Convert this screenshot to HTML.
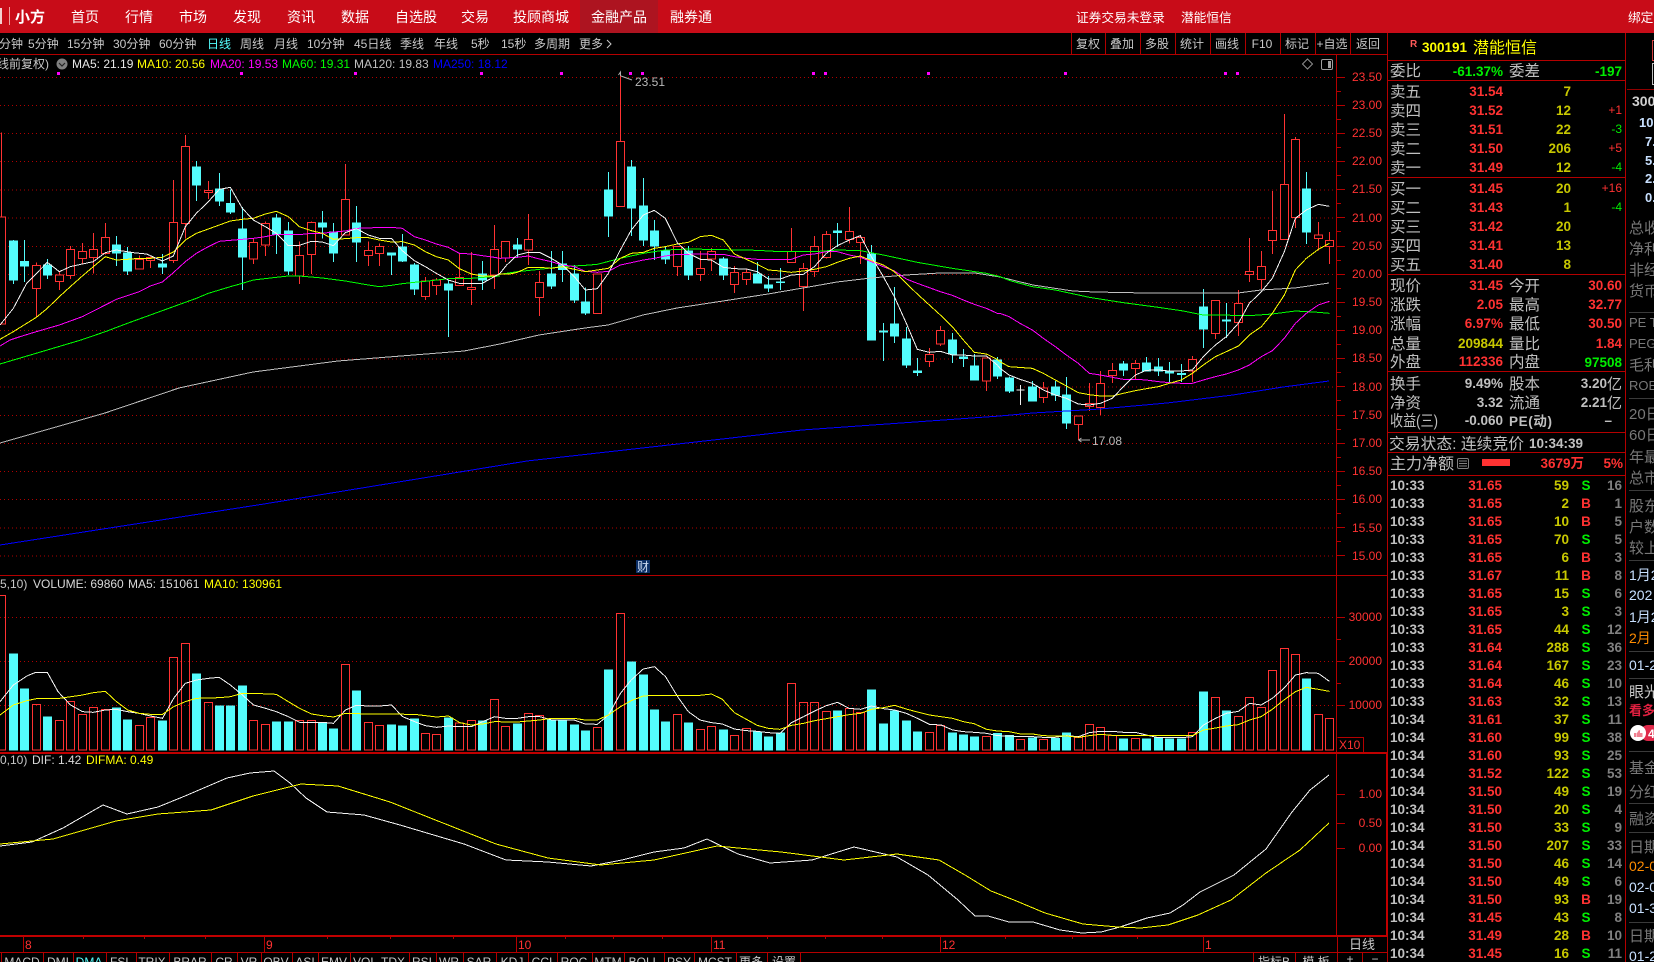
<!DOCTYPE html>
<html lang="zh"><head><meta charset="utf-8"><title>潜能恒信</title>
<style>
html,body{margin:0;padding:0;background:#000;width:1654px;height:962px;overflow:hidden}
svg{display:block}
text{font-family:"Liberation Sans","Noto Sans CJK SC",sans-serif}
.b text,text.b{font-weight:bold}
</style></head><body>
<svg width="1654" height="962" viewBox="0 0 1654 962" xmlns="http://www.w3.org/2000/svg">
<rect width="1654" height="962" fill="#000"/>
<!-- header -->
<rect width="1654" height="33" fill="#c80c18"/>
<rect x="580" width="78" height="33" fill="#ad1420"/>
<rect x="0" y="8" width="2" height="16" fill="#f3d0d0"/>
<rect x="9" y="7" width="1" height="18" fill="#f0a0a0"/>
<text x="15" y="22" font-size="15" font-weight="bold" fill="#fff">小方</text>
<g font-size="14" fill="#fff">
<text x="71" y="22">首页</text><text x="125" y="22">行情</text><text x="179" y="22">市场</text><text x="233" y="22">发现</text><text x="287" y="22">资讯</text><text x="341" y="22">数据</text><text x="395" y="22">自选股</text><text x="461" y="22">交易</text><text x="513" y="22">投顾商城</text><text x="591" y="22">金融产品</text><text x="670" y="22">融券通</text>
</g>
<g font-size="12.7" fill="#fff"><text x="1076" y="22">证券交易未登录</text><text x="1181" y="22">潜能恒信</text><text x="1628" y="22">绑定</text></g>
<!-- toolbar -->
<g font-size="12" fill="#c8c8c8">
<text x="-1" y="48">分钟</text><text x="28" y="48">5分钟</text><text x="67" y="48">15分钟</text><text x="113" y="48">30分钟</text><text x="159" y="48">60分钟</text><text x="207" y="48" fill="#54fcfc">日线</text><text x="240" y="48">周线</text><text x="274" y="48">月线</text><text x="307" y="48">10分钟</text><text x="354" y="48">45日线</text><text x="400" y="48">季线</text><text x="434" y="48">年线</text><text x="471" y="48">5秒</text><text x="501" y="48">15秒</text><text x="534" y="48">多周期</text><text x="579" y="48">更多</text>
</g>
<path d="M607 40l4 4-4 4" fill="none" stroke="#c8c8c8"/>
<g font-size="12" fill="#c8c8c8" text-anchor="middle">
<text x="1088" y="48">复权</text><text x="1122" y="48">叠加</text><text x="1157" y="48">多股</text><text x="1192" y="48">统计</text><text x="1227" y="48">画线</text><text x="1262" y="48">F10</text><text x="1297" y="48">标记</text><text x="1332" y="48">+自选</text><text x="1368" y="48">返回</text>
</g>
<path d="M1071.5 33V54M1105.5 33V54M1140.5 33V54M1175.5 33V54M1210.5 33V54M1245.5 33V54M1280.5 33V54M1315.5 33V54M1350.5 33V54" stroke="#b00000"/>
<!-- legend -->
<g font-size="12">
<text x="-3" y="68" fill="#c8c8c8">线前复权)</text>
<text x="72" y="68" fill="#e8e8e8">MA5: 21.19</text>
<text x="137" y="68" fill="#ffff00">MA10: 20.56</text>
<text x="210" y="68" fill="#ff00ff">MA20: 19.53</text>
<text x="282" y="68" fill="#00ff00">MA60: 19.31</text>
<text x="354" y="68" fill="#c0c0c0">MA120: 19.83</text>
<text x="433" y="68" fill="#0000ff">MA250: 18.12</text>
</g>
<circle cx="62" cy="64" r="5.5" fill="#808080"/><path d="M59 63l3 3 3-3" fill="none" stroke="#222" stroke-width="1.2"/>
<path d="M1307.5 59l5 5-5 5-5-5z" fill="none" stroke="#909090"/>
<rect x="1321.5" y="59.5" width="11" height="10" rx="1.5" fill="none" stroke="#a0a0a0"/><rect x="1328" y="61" width="3" height="7" fill="#a0a0a0"/>
<!-- magenta dots -->
<path d="M57 72h3v3h-3zM240 72h3v3h-3zM354 72h3v3h-3zM480 72h3v3h-3zM560 72h3v3h-3zM629 72h3v3h-3zM641 72h3v3h-3zM812 72h3v3h-3zM824 72h3v3h-3zM927 72h3v3h-3zM1064 72h3v3h-3zM1224 72h3v3h-3zM1236 72h3v3h-3z" fill="#ff00ff"/>
<!-- grid -->
<path d="M0 77H1337M0 105H1337M0 133H1337M0 161H1337M0 189.5H1337M0 217.5H1337M0 246H1337M0 274H1337M0 302H1337M0 330H1337M0 358.5H1337M0 386.5H1337M0 415H1337M0 443H1337M0 471H1337M0 499H1337M0 527.5H1337M0 555.5H1337M0 617H1337M0 661H1337M0 705H1337" stroke="#b00000" stroke-dasharray="1 3" fill="none" transform="translate(0,.5)"/>
<!-- candles -->
<g transform="translate(.5,70) scale(1,.33333)" shape-rendering="crispEdges">
<path vector-effect="non-scaling-stroke" stroke="#54fcfc" fill="none" d="M13 510V642M24 510V636M47 567V627M116 498V588M127 531V615M162 552V612M196 273V393M219 309V408M230 358V432M242 411V660M276 432V552M288 456V615M322 423V505M333 459V576M356 408V576M391 549V615M402 492V576M414 579V675M448 630V801M482 573V660M517 504V564M551 543V657M562 543V636M574 585V699M585 652V735M608 306V501M631 270V498M643 324V528M654 450V570M665 528V582M688 528V630M723 561V630M757 576V639M768 618V666M780 594V660M837 459V531M871 525V810M883 759V873M894 651V819M906 771V894M917 864V918M952 789V879M963 837V891M974 852V930M997 861V927M1009 920V969M1032 933V993M1055 933V993M1066 921V1077M1123 873V918M1146 861V903M1158 864V918M1169 876V938M1181 882V936M1203 657V834M1226 699V804M1306 306V522"/>
<path vector-effect="non-scaling-stroke" stroke="#ff3232" fill="none" d="M1 187V762M36 578V740M59 604V660M70 528V627M82 519V580M93 489V610M105 459V553M139 556V597M150 560V594M173 330V579M185 195V505M208 333V387M253 505V582M265 455V558M299 514V642M311 454V612M345 282V495M368 514V588M379 520V588M425 621V690M436 624V675M459 550V647M471 546V705M494 465V657M505 514V576M528 432V585M539 603V738M597 612V731M620 12V410M677 528V618M700 543V633M711 534V603M734 588V669M746 597V645M791 474V578M803 579V723M814 498V621M826 483V565M849 411V520M860 495V582M929 834V891M940 768V828M986 864V963M1043 936V999M1078 1038V1110M1089 939V1023M1100 903V1035M1112 879V939M1135 870V927M1192 858V936M1215 690V807M1238 660V798M1249 504V636M1261 543V657M1272 363V552M1284 132V510M1295 201V474M1318 456V542M1329 486V582"/>
<path vector-effect="non-scaling-stroke" stroke="#f0f0f0" fill="none" d="M1020 945V1005M1016 960H1024"/>
<path vector-effect="non-scaling-stroke" stroke="#ff3232" fill="#000" d="M-3 441h8V762h-8zM32 586h8V656h-8zM55 615h8V635h-8zM66 538h8V617h-8zM78 544h8V566h-8zM89 538h8V563h-8zM101 502h8V551h-8zM135 568h8V597h-8zM146 563h8V572h-8zM169 457h8V572h-8zM181 229h8V461h-8zM204 361h8V368h-8zM249 517h8V567h-8zM261 460h8V525h-8zM295 556h8V618h-8zM307 457h8V554h-8zM341 388h8V495h-8zM364 541h8V557h-8zM375 529h8V551h-8zM421 633h8V680h-8zM432 630h8V647h-8zM455 622h8V647h-8zM467 652h8V659h-8zM490 538h8V615h-8zM501 514h8V564h-8zM524 508h8V540h-8zM535 637h8V683h-8zM593 612h8V731h-8zM616 214h8V410h-8zM673 530h8V590h-8zM696 595h8V613h-8zM707 544h8V567h-8zM730 607h8V644h-8zM742 607h8V629h-8zM787 545h8V578h-8zM799 595h8V650h-8zM810 529h8V605h-8zM822 493h8V563h-8zM845 484h8V509h-8zM856 502h8V518h-8zM925 853h8V875h-8zM936 781h8V822h-8zM982 864h8V933h-8zM1039 954h8V983h-8zM1074 1038h8V1064h-8zM1085 1000h8V1010h-8zM1096 940h8V1013h-8zM1108 901h8V917h-8zM1131 880h8V896h-8zM1188 868h8V903h-8zM1211 691h8V791h-8zM1234 700h8V758h-8zM1245 604h8V613h-8zM1257 589h8V629h-8zM1268 481h8V512h-8zM1280 343h8V509h-8zM1291 208h8V442h-8zM1314 495h8V506h-8zM1325 511h8V530h-8z"/>
<path vector-effect="non-scaling-stroke" stroke="#54fcfc" fill="#54fcfc" d="M9 513h8V630h-8zM20 575h8V588h-8zM43 585h8V615h-8zM112 525h8V549h-8zM123 549h8V603h-8zM158 582h8V591h-8zM192 291h8V345h-8zM215 357h8V393h-8zM226 400h8V426h-8zM238 477h8V561h-8zM272 444h8V492h-8zM284 483h8V603h-8zM318 459h8V471h-8zM329 486h8V549h-8zM352 459h8V516h-8zM387 549h8V555h-8zM398 531h8V573h-8zM410 585h8V657h-8zM444 642h8V660h-8zM478 612h8V630h-8zM513 525h8V537h-8zM547 612h8V648h-8zM558 582h8V598h-8zM570 612h8V690h-8zM581 696h8V729h-8zM604 360h8V438h-8zM627 291h8V414h-8zM639 408h8V510h-8zM650 483h8V528h-8zM661 543h8V567h-8zM684 543h8V615h-8zM719 567h8V615h-8zM753 612h8V639h-8zM764 645h8V654h-8zM776 636h8V638h-8zM833 483h8V488h-8zM867 552h8V810h-8zM879 783h8V786h-8zM890 762h8V798h-8zM902 807h8V885h-8zM913 903h8V908h-8zM948 810h8V852h-8zM959 861h8V865h-8zM970 888h8V930h-8zM993 870h8V918h-8zM1005 924h8V963h-8zM1028 951h8V993h-8zM1051 951h8V975h-8zM1062 975h8V1059h-8zM1119 882h8V900h-8zM1142 879h8V903h-8zM1154 891h8V903h-8zM1165 903h8V909h-8zM1177 911h8V914h-8zM1199 711h8V777h-8zM1222 750h8V753h-8zM1302 357h8V486h-8z"/>
</g>
<!-- MA lines -->
<g fill="none" stroke-width="1" shape-rendering="crispEdges">
<path stroke="#0000ff" d="M0 545L264 504L527 461L802 430L1000 416L1033 413L1067 411L1100 409L1167 403L1233 395L1283 387L1329 381"/>
<path stroke="#c0c0c0" d="M0 443L105 413L179 388L253 372L338 361L464 351L500 344L539 335L585 328L608 325L643 315L677 308L723 301L768 294L803 288L837 282L871 278L906 275L940 273L975 273L1000 277L1033 285L1073 291L1095 292L1146 293L1181 293L1203 293L1238 293L1261 290L1295 288L1329 283"/>
<g stroke="#00ff00">
<polyline vector-effect="non-scaling-stroke" transform="translate(0,70) scale(.33333)" points="0,882 243,810 316,785 382,760 451,735 520,710 589,685 625,670 691,650 727,640 760,630 829,622 865,618 898,618 967,624 1036,633 1105,645 1138,650 1174,646 1207,641 1243,637 1276,634 1345,626 1414,625 1500,618"/>
<polyline vector-effect="non-scaling-stroke" transform="translate(500,70) scale(.33333)" points="0,613 52,605 118,598 187,590 256,586 292,583 361,565 430,550 496,540 565,537 670,539 772,541 841,545 943,545 1012,540 1081,542 1150,555 1252,577 1357,595 1459,610 1500,620 1530,632"/>
<polyline vector-effect="non-scaling-stroke" transform="translate(1000,100) scale(.33333)" points="30,542 97,560 166,570 268,592 370,608 475,622 544,632 610,645 715,646 748,647 817,642 886,633 955,637 988,640"/>
</g>
<g stroke="#ff00ff">
<polyline vector-effect="non-scaling-stroke" transform="translate(0,70) scale(.33333)" points="0,828 30,810 60,800 109,785 178,765 247,740 316,705 349,688 382,677 418,665 451,648 487,636 520,608 556,575 589,550 625,530 658,514 691,511 727,508 760,505 796,500 829,493 865,493 898,494 934,490 967,490 1000,486 1036,483 1069,475 1105,474 1138,472 1174,472 1207,475 1243,500 1276,510 1309,522 1345,532 1378,550 1414,552 1447,557 1483,562 1500,565"/>
<polyline vector-effect="non-scaling-stroke" transform="translate(500,70) scale(.33333)" points="0,565 52,562 85,558 118,567 154,575 187,585 223,590 256,604 292,607 325,604 361,585 394,578 430,570 463,565 496,558 532,553 565,553 601,552 634,553 670,553 703,560 739,565 772,568 805,568 841,568 874,568 910,555 943,552 979,545 1012,545 1048,555 1081,562 1114,575 1150,590 1183,603 1219,627 1252,640 1288,653 1321,665 1357,676 1390,690 1423,703 1459,715 1492,730 1500,730"/>
<polyline vector-effect="non-scaling-stroke" transform="translate(1000,100) scale(.33333)" points="0,640 27,650 60,670 97,690 130,715 166,740 199,765 235,790 268,820 301,825 337,832 370,838 406,838 439,840 475,845 508,848 544,850 577,850 610,840 646,830 679,822 715,810 748,795 784,770 817,752 853,715 886,670 919,640 955,615 988,604"/>
</g>
<g stroke="#ffff00">
<polyline vector-effect="non-scaling-stroke" transform="translate(0,70) scale(.33333)" points="0,808 40,785 109,742 142,715 178,680 211,650 247,618 280,590 316,560 349,570 382,568 418,565 451,565 487,562 520,546 556,510 589,490 625,477 658,465 691,453 727,448 760,445 796,432 829,424 865,440 898,470 934,482 967,490 1000,508 1036,506 1069,503 1105,503 1138,510 1174,516 1207,515 1243,525 1276,545 1309,560 1345,570 1378,596 1414,612 1447,618 1483,618 1500,612"/>
<polyline vector-effect="non-scaling-stroke" transform="translate(500,70) scale(.33333)" points="0,612 30,612 52,607 85,592 118,592 154,595 187,590 223,598 256,605 292,600 325,595 361,565 394,550 430,547 463,535 496,530 532,522 565,517 601,500 634,496 670,510 703,552 739,568 772,583 805,600 841,603 874,607 910,603 943,598 979,590 1012,577 1048,565 1081,558 1114,572 1150,585 1183,605 1219,640 1252,672 1288,705 1321,735 1357,770 1390,810 1423,847 1459,852 1492,868 1500,875"/>
<polyline vector-effect="non-scaling-stroke" transform="translate(1000,100) scale(.33333)" points="0,785 27,800 97,805 130,820 166,840 199,858 235,878 268,884 301,888 337,888 370,880 406,872 439,866 475,860 508,850 544,840 577,820 610,795 646,770 679,755 715,738 748,705 784,680 817,640 853,585 886,510 919,475 955,448 988,430"/>
</g>
<g stroke="#f4f4f4">
<polyline vector-effect="non-scaling-stroke" transform="translate(0,70) scale(.33333)" points="0,765 40,715 80,640 142,577 178,605 211,590 247,582 280,575 316,548 349,540 400,548 440,552 487,573 520,558 556,470 589,430 625,395 658,358 691,352 727,415 760,450 796,470 829,490 865,527 898,526 934,514 967,516 1000,527 1036,488 1069,476 1105,495 1138,505 1174,505 1207,542 1243,572 1276,590 1309,610 1345,630 1378,640 1414,640 1447,640 1483,620 1500,610"/>
<polyline vector-effect="non-scaling-stroke" transform="translate(500,70) scale(.33333)" points="0,610 20,585 52,555 85,547 118,547 154,565 187,585 223,620 256,660 292,656 325,610 361,540 394,480 430,435 463,421 496,445 532,518 565,550 601,568 634,570 670,592 703,596 739,597 772,605 805,627 841,627 874,615 910,613 943,590 979,550 1012,527 1048,510 1081,497 1114,560 1150,620 1183,680 1219,760 1252,838 1288,847 1321,844 1357,855 1390,855 1423,858 1459,858 1492,885 1500,895"/>
<polyline vector-effect="non-scaling-stroke" transform="translate(1000,100) scale(.33333)" points="0,805 27,825 60,838 97,850 130,870 166,885 199,895 235,912 268,915 301,910 337,895 370,860 406,825 439,811 475,810 508,813 544,813 577,810 610,770 646,735 679,710 715,670 748,610 784,575 817,535 853,455 886,355 919,330 955,313 988,319"/>
</g>
</g>
<!-- hi/lo labels -->
<path d="M620.5 76V72l-2 3M621 76l11 4" fill="none" stroke="#b0b0b0"/>
<text x="635" y="86" font-size="12" fill="#b8b8b8">23.51</text>
<path d="M1078.5 440l3-2M1078.5 440l3 2M1079 440H1090" fill="none" stroke="#b0b0b0"/>
<text x="1092" y="445" font-size="12" fill="#b8b8b8">17.08</text>
<rect x="636" y="560" width="14" height="13" fill="#0c2f66"/>
<text x="637" y="571" font-size="12" fill="#c8d8f0">财</text>
<!-- volume -->
<g transform="translate(.5,570) scale(1,.33333)" shape-rendering="crispEdges">
<path vector-effect="non-scaling-stroke" stroke="#ff3232" fill="none" d="M-3 76h8V540h-8zM32 403h8V540h-8zM55 451h8V540h-8zM66 394h8V540h-8zM78 433h8V540h-8zM89 412h8V540h-8zM101 418h8V540h-8zM135 466h8V540h-8zM146 442h8V540h-8zM169 262h8V540h-8zM181 220h8V540h-8zM204 397h8V540h-8zM249 451h8V540h-8zM261 463h8V540h-8zM295 451h8V540h-8zM307 451h8V540h-8zM341 283h8V540h-8zM364 457h8V540h-8zM375 466h8V540h-8zM421 490h8V540h-8zM432 493h8V540h-8zM455 459h8V540h-8zM467 451h8V540h-8zM490 388h8V540h-8zM501 469h8V540h-8zM524 430h8V540h-8zM535 436h8V540h-8zM593 472h8V540h-8zM616 130h8V540h-8zM673 433h8V540h-8zM696 478h8V540h-8zM707 469h8V540h-8zM730 496h8V540h-8zM742 475h8V540h-8zM787 340h8V540h-8zM799 397h8V540h-8zM810 397h8V540h-8zM822 424h8V540h-8zM845 415h8V540h-8zM856 427h8V540h-8zM925 487h8V540h-8zM936 466h8V540h-8zM982 499h8V540h-8zM1016 508h8V540h-8zM1039 508h8V540h-8zM1074 502h8V540h-8zM1085 463h8V540h-8zM1096 472h8V540h-8zM1108 497h8V540h-8zM1131 505h8V540h-8zM1188 487h8V540h-8zM1211 382h8V540h-8zM1234 439h8V540h-8zM1245 382h8V540h-8zM1257 412h8V540h-8zM1268 301h8V540h-8zM1280 235h8V540h-8zM1291 253h8V540h-8zM1314 433h8V540h-8zM1325 445h8V540h-8z"/>
<path vector-effect="non-scaling-stroke" stroke="#54fcfc" fill="#54fcfc" d="M9 252h8V540h-8zM20 357h8V540h-8zM43 441h8V540h-8zM112 414h8V540h-8zM123 450h8V540h-8zM158 453h8V540h-8zM192 312h8V540h-8zM215 408h8V540h-8zM226 408h8V540h-8zM238 348h8V540h-8zM272 456h8V540h-8zM284 456h8V540h-8zM318 459h8V540h-8zM329 477h8V540h-8zM352 363h8V540h-8zM387 465h8V540h-8zM398 468h8V540h-8zM410 447h8V540h-8zM444 444h8V540h-8zM478 453h8V540h-8zM513 462h8V540h-8zM547 450h8V540h-8zM558 450h8V540h-8zM570 465h8V540h-8zM581 483h8V540h-8zM604 300h8V540h-8zM627 276h8V540h-8zM639 315h8V540h-8zM650 420h8V540h-8zM661 456h8V540h-8zM684 459h8V540h-8zM719 480h8V540h-8zM753 486h8V540h-8zM764 501h8V540h-8zM776 489h8V540h-8zM833 423h8V540h-8zM867 360h8V540h-8zM879 462h8V540h-8zM890 423h8V540h-8zM902 453h8V540h-8zM913 486h8V540h-8zM948 489h8V540h-8zM959 495h8V540h-8zM970 501h8V540h-8zM993 491h8V540h-8zM1005 496h8V540h-8zM1028 504h8V540h-8zM1051 506h8V540h-8zM1062 489h8V540h-8zM1119 507h8V540h-8zM1142 507h8V540h-8zM1154 504h8V540h-8zM1165 507h8V540h-8zM1177 507h8V540h-8zM1199 366h8V540h-8zM1222 423h8V540h-8zM1302 327h8V540h-8z"/>
</g>
<g fill="none" shape-rendering="crispEdges">
<polyline vector-effect="non-scaling-stroke" stroke="#f4f4f4" transform="translate(0,570) scale(.4464,.33333)" points="0,395 30,345 60,318 80,307 106,307 130,365 158,405 185,425 209,427 236,420 261,418 286,425 312,430 337,438 364,445 389,385 415,340 440,330 467,325 491,322 516,345 543,375 568,405 595,415 619,425 646,440 671,457 698,457 722,457 747,460 774,420 798,406 825,408 850,408 877,405 902,440 929,455 953,467 978,472 1005,468 1030,470 1056,470 1081,455 1108,440 1132,445 1159,445 1184,440 1209,440 1236,450 1261,450 1286,450 1311,462 1338,463 1363,435 1390,370 1414,330 1441,297 1466,290 1491,320 1518,380 1542,425 1568,450"/>
<polyline vector-effect="non-scaling-stroke" stroke="#ffff00" transform="translate(0,570) scale(.4464,.33333)" points="0,435 30,405 60,392 82,386 133,385 185,375 209,368 236,364 261,395 286,420 312,430 337,433 364,433 389,410 415,395 440,385 491,383 516,380 543,370 568,370 619,373 646,395 671,415 698,432 722,437 747,441 774,430 825,432 929,433 978,441 1005,438 1030,458 1056,465 1081,462 1108,455 1159,456 1209,450 1236,445 1286,445 1311,450 1338,450 1363,435 1390,410 1414,392 1441,378 1466,376 1568,376"/>
<polyline vector-effect="non-scaling-stroke" stroke="#f4f4f4" transform="translate(700,570) scale(.4464,.33333)" points="0,450 26,458 50,462 77,477 104,482 128,484 153,488 179,490 205,458 232,440 257,423 283,407 308,397 334,415 360,418 384,408 411,416 436,420 462,430 487,445 514,463 540,465 566,480 590,485 614,487 642,490 666,497 692,498 718,500 745,500 769,502 795,502 821,497 848,500 872,488 897,484 924,484 949,487 975,487 1000,495 1026,503 1052,503 1078,503 1103,500 1128,465 1155,445 1179,430 1206,424 1231,400 1257,405 1282,385 1308,355 1334,315 1358,308 1385,310 1410,334"/>
<polyline vector-effect="non-scaling-stroke" stroke="#ffff00" transform="translate(700,570) scale(.4464,.33333)" points="0,376 26,372 50,388 77,428 104,448 128,466 153,475 179,478 205,466 232,460 257,452 283,446 308,440 334,434 360,430 384,418 411,413 436,406 462,417 487,426 514,435 540,440 566,445 590,455 614,461 642,478 666,483 692,485 718,492 745,492 769,497 795,498 821,498 848,502 872,497 897,493 924,496 1000,497 1103,497 1128,480 1155,474 1179,468 1206,464 1231,450 1257,440 1282,418 1308,390 1334,365 1358,352 1385,358 1410,364"/>
</g>
<g font-size="12">
<text x="0" y="588" fill="#c8c8c8">5,10)</text>
<text x="33" y="588" fill="#d8d8d8">VOLUME: 69860</text>
<text x="128" y="588" fill="#d8d8d8">MA5: 151061</text>
<text x="204" y="588" fill="#ffff00">MA10: 130961</text>
<text x="0" y="764" fill="#c8c8c8">0,10)</text>
<text x="32" y="764" fill="#d8d8d8">DIF: 1.42</text>
<text x="86" y="764" fill="#ffff00">DIFMA: 0.49</text>
</g>
<!-- macd -->
<g fill="none" shape-rendering="crispEdges">
<path stroke="#f4f4f4" d="M0 846L32 842L63 828L103 805L127 814L158 807L185 796L227 778L250 773L274 771L290 783L306 798L327 812L364 815L400 825L464 844L506 860L548 862L591 866L622 860L654 852L684 848L707 839L738 854L770 863L812 860L854 847L897 857L928 875L958 900L975 916L988 916L1009 922L1033 922L1060 930L1082 933L1101 932L1120 927L1147 918L1170 913L1183 905L1200 892L1234 875L1266 849L1292 812L1310 790L1329 775"/>
<path stroke="#ffff00" d="M0 844L53 839L116 821L158 814L211 810L253 796L301 784L338 786L390 802L443 823L496 844L548 858L601 865L654 860L717 846L781 852L844 860L897 854L939 860L965 875L991 891L1014 900L1045 913L1083 924L1118 927L1141 928L1168 925L1198 915L1231 900L1266 873L1300 850L1329 823"/>
</g>
<!-- frame lines -->
<g stroke="#b40000" fill="none" shape-rendering="crispEdges">
<path d="M0 54.5H1387M0 575.5H1387M1336.5 54V936M1387.5 33V962M1625.5 33V962"/>
<path stroke-width="2" stroke="#c00000" d="M0 753H1388M0 936H1388M1387 752V936"/>
<path d="M0 952.5H1388M1337.5 936V962M1337.5 737.5H1363.5V752"/>
<path d="M1387 60.5H1625M1387 80.5H1625M1387 177.5H1625M1387 274.5H1625M1387 371.5H1625M1387 432.5H1625M1387 452.5H1625M1387 475.5H1625"/>
<path d="M1337 77.5h8M1337 105.5h8M1337 133.5h8M1337 161.5h8M1337 189.5h8M1337 217.5h8M1337 246.5h8M1337 274.5h8M1337 302.5h8M1337 330.5h8M1337 358.5h8M1337 386.5h8M1337 415.5h8M1337 443.5h8M1337 471.5h8M1337 499.5h8M1337 527.5h8M1337 555.5h8M1337 91.5h4M1337 119.5h4M1337 147.5h4M1337 175.5h4M1337 203.5h4M1337 231.5h4M1337 260.5h4M1337 288.5h4M1337 316.5h4M1337 344.5h4M1337 372.5h4M1337 400.5h4M1337 429.5h4M1337 457.5h4M1337 485.5h4M1337 513.5h4M1337 541.5h4M1337 617.5h8M1337 661.5h8M1337 705.5h8M1337 639.5h4M1337 683.5h4M1337 794.5h8M1337 823.5h8M1337 848.5h8"/>
<path d="M23.5 936V952M264.5 936V952M516.5 936V952M711.5 936V952M940.5 936V952M1203.5 936V952M83.5 936v3M144.5 936v3M205.5 936v3M327.5 936v3M390.5 936v3M453.5 936v3M565.5 936v3M613.5 936v3M662.5 936v3M767.5 936v3M825.5 936v3M882.5 936v3M1005.5 936v3M1072.5 936v3M1137.5 936v3"/>
<path d="M1.5 952V962M43.5 952V962M73.5 952V962M106.5 952V962M136.5 952V962M169.5 952V962M211.5 952V962M237.5 952V962M261.5 952V962M292.5 952V962M318.5 952V962M350.5 952V962M409.5 952V962M436.5 952V962M463.5 952V962M496.5 952V962M528.5 952V962M557.5 952V962M592.5 952V962M624.5 952V962M664.5 952V962M694.5 952V962M736.5 952V962M767.5 952V962M800.5 952V962M1253.5 952V962M1295.5 952V962M1362.5 952V962"/>
</g>
<!-- axis labels -->
<g font-size="12" fill="#ff3232" text-anchor="end">
<text x="1382" y="81">23.50</text><text x="1382" y="109">23.00</text><text x="1382" y="137">22.50</text><text x="1382" y="165">22.00</text><text x="1382" y="193">21.50</text><text x="1382" y="222">21.00</text><text x="1382" y="250">20.50</text><text x="1382" y="278">20.00</text><text x="1382" y="306">19.50</text><text x="1382" y="334">19.00</text><text x="1382" y="362">18.50</text><text x="1382" y="391">18.00</text><text x="1382" y="419">17.50</text><text x="1382" y="447">17.00</text><text x="1382" y="475">16.50</text><text x="1382" y="503">16.00</text><text x="1382" y="532">15.50</text><text x="1382" y="560">15.00</text>
<text x="1382" y="621">30000</text><text x="1382" y="665">20000</text><text x="1382" y="709">10000</text>
<text x="1382" y="798">1.00</text><text x="1382" y="827">0.50</text><text x="1382" y="852">0.00</text>
</g>
<text x="1339" y="749" font-size="12" fill="#ff3232">X10</text>
<g font-size="12" fill="#ff3232">
<text x="25" y="949">8</text><text x="266" y="949">9</text><text x="518" y="949">10</text><text x="713" y="949">11</text><text x="942" y="949">12</text><text x="1205" y="949">1</text>
</g>
<text x="1362" y="949" font-size="13" fill="#c8c8c8" text-anchor="middle">日线</text>
<!-- tabs -->
<g font-size="12" fill="#c8c8c8" text-anchor="middle">
<text x="22" y="966">MACD</text><text x="58" y="966">DMI</text><text x="89" y="966" fill="#54fcfc">DMA</text><text x="121" y="966">FSL</text><text x="152" y="966">TRIX</text><text x="190" y="966">BRAR</text><text x="224" y="966">CR</text><text x="249" y="966">VR</text><text x="276" y="966">OBV</text><text x="305" y="966">ASI</text><text x="334" y="966">EMV</text><text x="379" y="966">VOL-TDX</text><text x="422" y="966">RSI</text><text x="449" y="966">WR</text><text x="479" y="966">SAR</text><text x="512" y="966">KDJ</text><text x="542" y="966">CCI</text><text x="574" y="966">ROC</text><text x="608" y="966">MTM</text><text x="644" y="966">BOLL</text><text x="679" y="966">PSY</text><text x="715" y="966">MCST</text><text x="751" y="966">更多</text><text x="784" y="966">设置</text>
<text x="1274" y="966">指标B</text><text x="1316" y="966">模 板</text><text x="1350" y="963">+</text><text x="1375" y="963">−</text>
</g>
<!-- quote panel head -->
<text x="1410" y="47" font-size="10" font-weight="bold" fill="#ff5a5a">R</text>
<text x="1422" y="52" font-size="13.5" font-weight="bold" fill="#ffff00">300191</text>
<text x="1473" y="53" font-size="16" fill="#ffff00">潜能恒信</text>
<!-- labels -->
<g font-size="15.5" fill="#c0c0c0">
<text x="1390" y="76">委比</text><text x="1509" y="76">委差</text>
<text x="1390" y="97">卖五</text><text x="1390" y="116">卖四</text><text x="1390" y="135">卖三</text><text x="1390" y="154">卖二</text><text x="1390" y="173">卖一</text>
<text x="1390" y="194">买一</text><text x="1390" y="213">买二</text><text x="1390" y="232">买三</text><text x="1390" y="251">买四</text><text x="1390" y="270">买五</text>
<text x="1390" y="291">现价</text><text x="1390" y="310">涨跌</text><text x="1390" y="329">涨幅</text><text x="1390" y="349">总量</text><text x="1390" y="367">外盘</text>
<text x="1509" y="291">今开</text><text x="1509" y="310">最高</text><text x="1509" y="329">最低</text><text x="1509" y="349">量比</text><text x="1509" y="367">内盘</text>
<text x="1390" y="389">换手</text><text x="1390" y="408">净资</text><text x="1390" y="426" textLength="48" lengthAdjust="spacingAndGlyphs">收益(三)</text>
<text x="1509" y="389">股本</text><text x="1509" y="408">流通</text>
<text x="1389" y="449" textLength="135" lengthAdjust="spacingAndGlyphs">交易状态: 连续竞价</text>
<text x="1390" y="469" font-size="16">主力净额</text>
</g>
<text x="1509" y="426" font-size="13.5" font-weight="bold" fill="#c0c0c0" textLength="43">PE(动)</text>
<text x="1529" y="448" font-size="13.5" font-weight="bold" fill="#c0c0c0">10:34:39</text>
<rect x="1457.5" y="458.5" width="11" height="10" rx="1.5" fill="none" stroke="#808080"/><path d="M1459 461h8M1459 463.5h8M1459 466h8" stroke="#808080"/>
<rect x="1482" y="459" width="28" height="7" fill="#ff3232"/>
<g class="b" font-size="13.5" text-anchor="end">
<g fill="#00ee00"><text x="1503" y="76">-61.37%</text><text x="1622" y="76">-197</text><text x="1622" y="367">97508</text></g>
<g fill="#ff3232">
<text x="1503" y="96">31.54</text><text x="1503" y="115">31.52</text><text x="1503" y="134">31.51</text><text x="1503" y="153">31.50</text><text x="1503" y="172">31.49</text>
<text x="1503" y="193">31.45</text><text x="1503" y="212">31.43</text><text x="1503" y="231">31.42</text><text x="1503" y="250">31.41</text><text x="1503" y="269">31.40</text>
<text x="1503" y="290">31.45</text><text x="1503" y="309">2.05</text><text x="1503" y="328">6.97%</text><text x="1503" y="366">112336</text>
<text x="1622" y="290">30.60</text><text x="1622" y="309">32.77</text><text x="1622" y="328">30.50</text><text x="1622" y="348">1.84</text>
<text x="1584" y="468">3679万</text><text x="1623" y="468">5%</text>
</g>
<g fill="#c8c800">
<text x="1571" y="96">7</text><text x="1571" y="115">12</text><text x="1571" y="134">22</text><text x="1571" y="153">206</text><text x="1571" y="172">12</text>
<text x="1571" y="193">20</text><text x="1571" y="212">1</text><text x="1571" y="231">20</text><text x="1571" y="250">13</text><text x="1571" y="269">8</text>
<text x="1503" y="348">209844</text>
</g>
<g fill="#c0c0c0">
<text x="1503" y="388">9.49%</text><text x="1503" y="407">3.32</text><text x="1503" y="425">-0.060</text>
<text x="1612" y="425">–</text>
</g>
</g>
<g font-size="13.5" font-weight="bold" fill="#c0c0c0" text-anchor="end"><text x="1607" y="388">3.20</text><text x="1607" y="407">2.21</text></g>
<g font-size="15" fill="#c0c0c0"><text x="1607" y="389">亿</text><text x="1607" y="408">亿</text></g>
<g font-size="12" text-anchor="end">
<text x="1622" y="114" fill="#ff3232">+1</text><text x="1622" y="133" fill="#00ee00">-3</text><text x="1622" y="152" fill="#ff3232">+5</text><text x="1622" y="171" fill="#00ee00">-4</text>
<text x="1622" y="192" fill="#ff3232">+16</text><text x="1622" y="211" fill="#00ee00">-4</text>
</g>
<!-- ticks -->
<g class="b" font-size="13.5">
<g fill="#c0c0c0">
<text x="1390" y="490">10:33</text><text x="1390" y="508">10:33</text><text x="1390" y="526">10:33</text><text x="1390" y="544">10:33</text><text x="1390" y="562">10:33</text><text x="1390" y="580">10:33</text><text x="1390" y="598">10:33</text><text x="1390" y="616">10:33</text><text x="1390" y="634">10:33</text><text x="1390" y="652">10:33</text><text x="1390" y="670">10:33</text><text x="1390" y="688">10:33</text><text x="1390" y="706">10:33</text><text x="1390" y="724">10:34</text><text x="1390" y="742">10:34</text><text x="1390" y="760">10:34</text><text x="1390" y="778">10:34</text><text x="1390" y="796">10:34</text><text x="1390" y="814">10:34</text><text x="1390" y="832">10:34</text><text x="1390" y="850">10:34</text><text x="1390" y="868">10:34</text><text x="1390" y="886">10:34</text><text x="1390" y="904">10:34</text><text x="1390" y="922">10:34</text><text x="1390" y="940">10:34</text><text x="1390" y="958">10:34</text>
</g>
<g fill="#ff3232" text-anchor="end">
<text x="1502" y="490">31.65</text><text x="1502" y="508">31.65</text><text x="1502" y="526">31.65</text><text x="1502" y="544">31.65</text><text x="1502" y="562">31.65</text><text x="1502" y="580">31.67</text><text x="1502" y="598">31.65</text><text x="1502" y="616">31.65</text><text x="1502" y="634">31.65</text><text x="1502" y="652">31.64</text><text x="1502" y="670">31.64</text><text x="1502" y="688">31.64</text><text x="1502" y="706">31.63</text><text x="1502" y="724">31.61</text><text x="1502" y="742">31.60</text><text x="1502" y="760">31.60</text><text x="1502" y="778">31.52</text><text x="1502" y="796">31.50</text><text x="1502" y="814">31.50</text><text x="1502" y="832">31.50</text><text x="1502" y="850">31.50</text><text x="1502" y="868">31.50</text><text x="1502" y="886">31.50</text><text x="1502" y="904">31.50</text><text x="1502" y="922">31.45</text><text x="1502" y="940">31.49</text><text x="1502" y="958">31.45</text>
</g>
<g fill="#c8c800" text-anchor="end">
<text x="1569" y="490">59</text><text x="1569" y="508">2</text><text x="1569" y="526">10</text><text x="1569" y="544">70</text><text x="1569" y="562">6</text><text x="1569" y="580">11</text><text x="1569" y="598">15</text><text x="1569" y="616">3</text><text x="1569" y="634">44</text><text x="1569" y="652">288</text><text x="1569" y="670">167</text><text x="1569" y="688">46</text><text x="1569" y="706">32</text><text x="1569" y="724">37</text><text x="1569" y="742">99</text><text x="1569" y="760">93</text><text x="1569" y="778">122</text><text x="1569" y="796">49</text><text x="1569" y="814">20</text><text x="1569" y="832">33</text><text x="1569" y="850">207</text><text x="1569" y="868">46</text><text x="1569" y="886">49</text><text x="1569" y="904">93</text><text x="1569" y="922">43</text><text x="1569" y="940">28</text><text x="1569" y="958">16</text>
</g>
<g text-anchor="middle" fill="#00ee00">
<text x="1586" y="490">S</text><text x="1586" y="508" fill="#ff3232">B</text><text x="1586" y="526" fill="#ff3232">B</text><text x="1586" y="544">S</text><text x="1586" y="562" fill="#ff3232">B</text><text x="1586" y="580" fill="#ff3232">B</text><text x="1586" y="598">S</text><text x="1586" y="616">S</text><text x="1586" y="634">S</text><text x="1586" y="652">S</text><text x="1586" y="670">S</text><text x="1586" y="688">S</text><text x="1586" y="706">S</text><text x="1586" y="724">S</text><text x="1586" y="742">S</text><text x="1586" y="760">S</text><text x="1586" y="778">S</text><text x="1586" y="796">S</text><text x="1586" y="814">S</text><text x="1586" y="832">S</text><text x="1586" y="850">S</text><text x="1586" y="868">S</text><text x="1586" y="886">S</text><text x="1586" y="904" fill="#ff3232">B</text><text x="1586" y="922">S</text><text x="1586" y="940" fill="#ff3232">B</text><text x="1586" y="958">S</text>
</g>
<g fill="#808080" text-anchor="end">
<text x="1622" y="490">16</text><text x="1622" y="508">1</text><text x="1622" y="526">5</text><text x="1622" y="544">5</text><text x="1622" y="562">3</text><text x="1622" y="580">8</text><text x="1622" y="598">6</text><text x="1622" y="616">3</text><text x="1622" y="634">12</text><text x="1622" y="652">36</text><text x="1622" y="670">23</text><text x="1622" y="688">10</text><text x="1622" y="706">13</text><text x="1622" y="724">11</text><text x="1622" y="742">38</text><text x="1622" y="760">25</text><text x="1622" y="778">53</text><text x="1622" y="796">19</text><text x="1622" y="814">4</text><text x="1622" y="832">9</text><text x="1622" y="850">33</text><text x="1622" y="868">14</text><text x="1622" y="886">6</text><text x="1622" y="904">19</text><text x="1622" y="922">8</text><text x="1622" y="940">10</text><text x="1622" y="958">11</text>
</g>
</g>
<!-- right strip -->
<rect x="1652.5" y="40.5" width="4" height="20" fill="none" stroke="#d04040"/>
<rect x="1652.5" y="63.5" width="4" height="21" fill="none" stroke="#c0c0c0"/>
<path d="M1627 89.5H1654" stroke="#900000"/>
<path d="M1629 312.5H1654M1629 398.5H1654M1629 490.5H1654M1629 560.5H1654M1629 651.5H1654M1629 678.5H1654M1629 751.5H1654M1629 803.5H1654M1629 832.5H1654M1629 922.5H1654" stroke="#3a3a3a"/>
<g class="b" font-size="13" fill="#c8e0ff">
<text x="1632" y="106" font-size="14" fill="#d0d0d0">300</text><text x="1639" y="127">10.</text><text x="1645" y="146">7.</text><text x="1645" y="165">5.</text><text x="1645" y="183">2.</text><text x="1645" y="202">0.</text>
</g>
<g font-size="15" fill="#787878">
<text x="1629" y="233">总收</text><text x="1629" y="254">净利</text><text x="1629" y="275">非经</text><text x="1629" y="296">货币</text>
<text x="1629" y="327" font-size="13">PE T</text><text x="1629" y="348" font-size="13">PEG</text><text x="1629" y="370">毛利</text><text x="1629" y="390" font-size="13">ROE</text>
<text x="1629" y="419">20日</text><text x="1629" y="440">60日</text><text x="1629" y="462">年最</text><text x="1629" y="483">总市</text>
<text x="1629" y="511">股东</text><text x="1629" y="532">户数</text><text x="1629" y="553">较上</text>
<text x="1629" y="773">基金</text><text x="1629" y="797">分红</text><text x="1629" y="824">融资</text><text x="1629" y="852">日期</text><text x="1629" y="941">日期</text>
</g>
<g font-size="14" fill="#c8e0ff">
<text x="1629" y="580">1月2</text><text x="1629" y="600">202</text><text x="1629" y="622">1月2</text>
<text x="1629" y="670">01-2</text><text x="1629" y="892">02-0</text><text x="1629" y="913">01-3</text><text x="1629" y="961">01-2</text>
<text x="1629" y="643" fill="#ff8c00">2月</text><text x="1629" y="871" fill="#ff8c00">02-0</text>
<text x="1629" y="697" font-size="15" fill="#c8c8c8">眼光</text>
<text x="1629" y="715" font-size="13" font-weight="bold" fill="#e02040">看多</text>
</g>
<rect x="1640" y="725" width="20" height="16" rx="8" fill="#e0294a"/>
<circle cx="1638" cy="733" r="8" fill="#fff"/>
<path d="M1634 733h2.500v4h-2.500zM1637 737v-4l2-3 1 .5v2.500h2.500v4z" fill="#f08090"/>
<text x="1648" y="738" font-size="12" font-weight="bold" fill="#fff">4</text>
</svg>
</body></html>
